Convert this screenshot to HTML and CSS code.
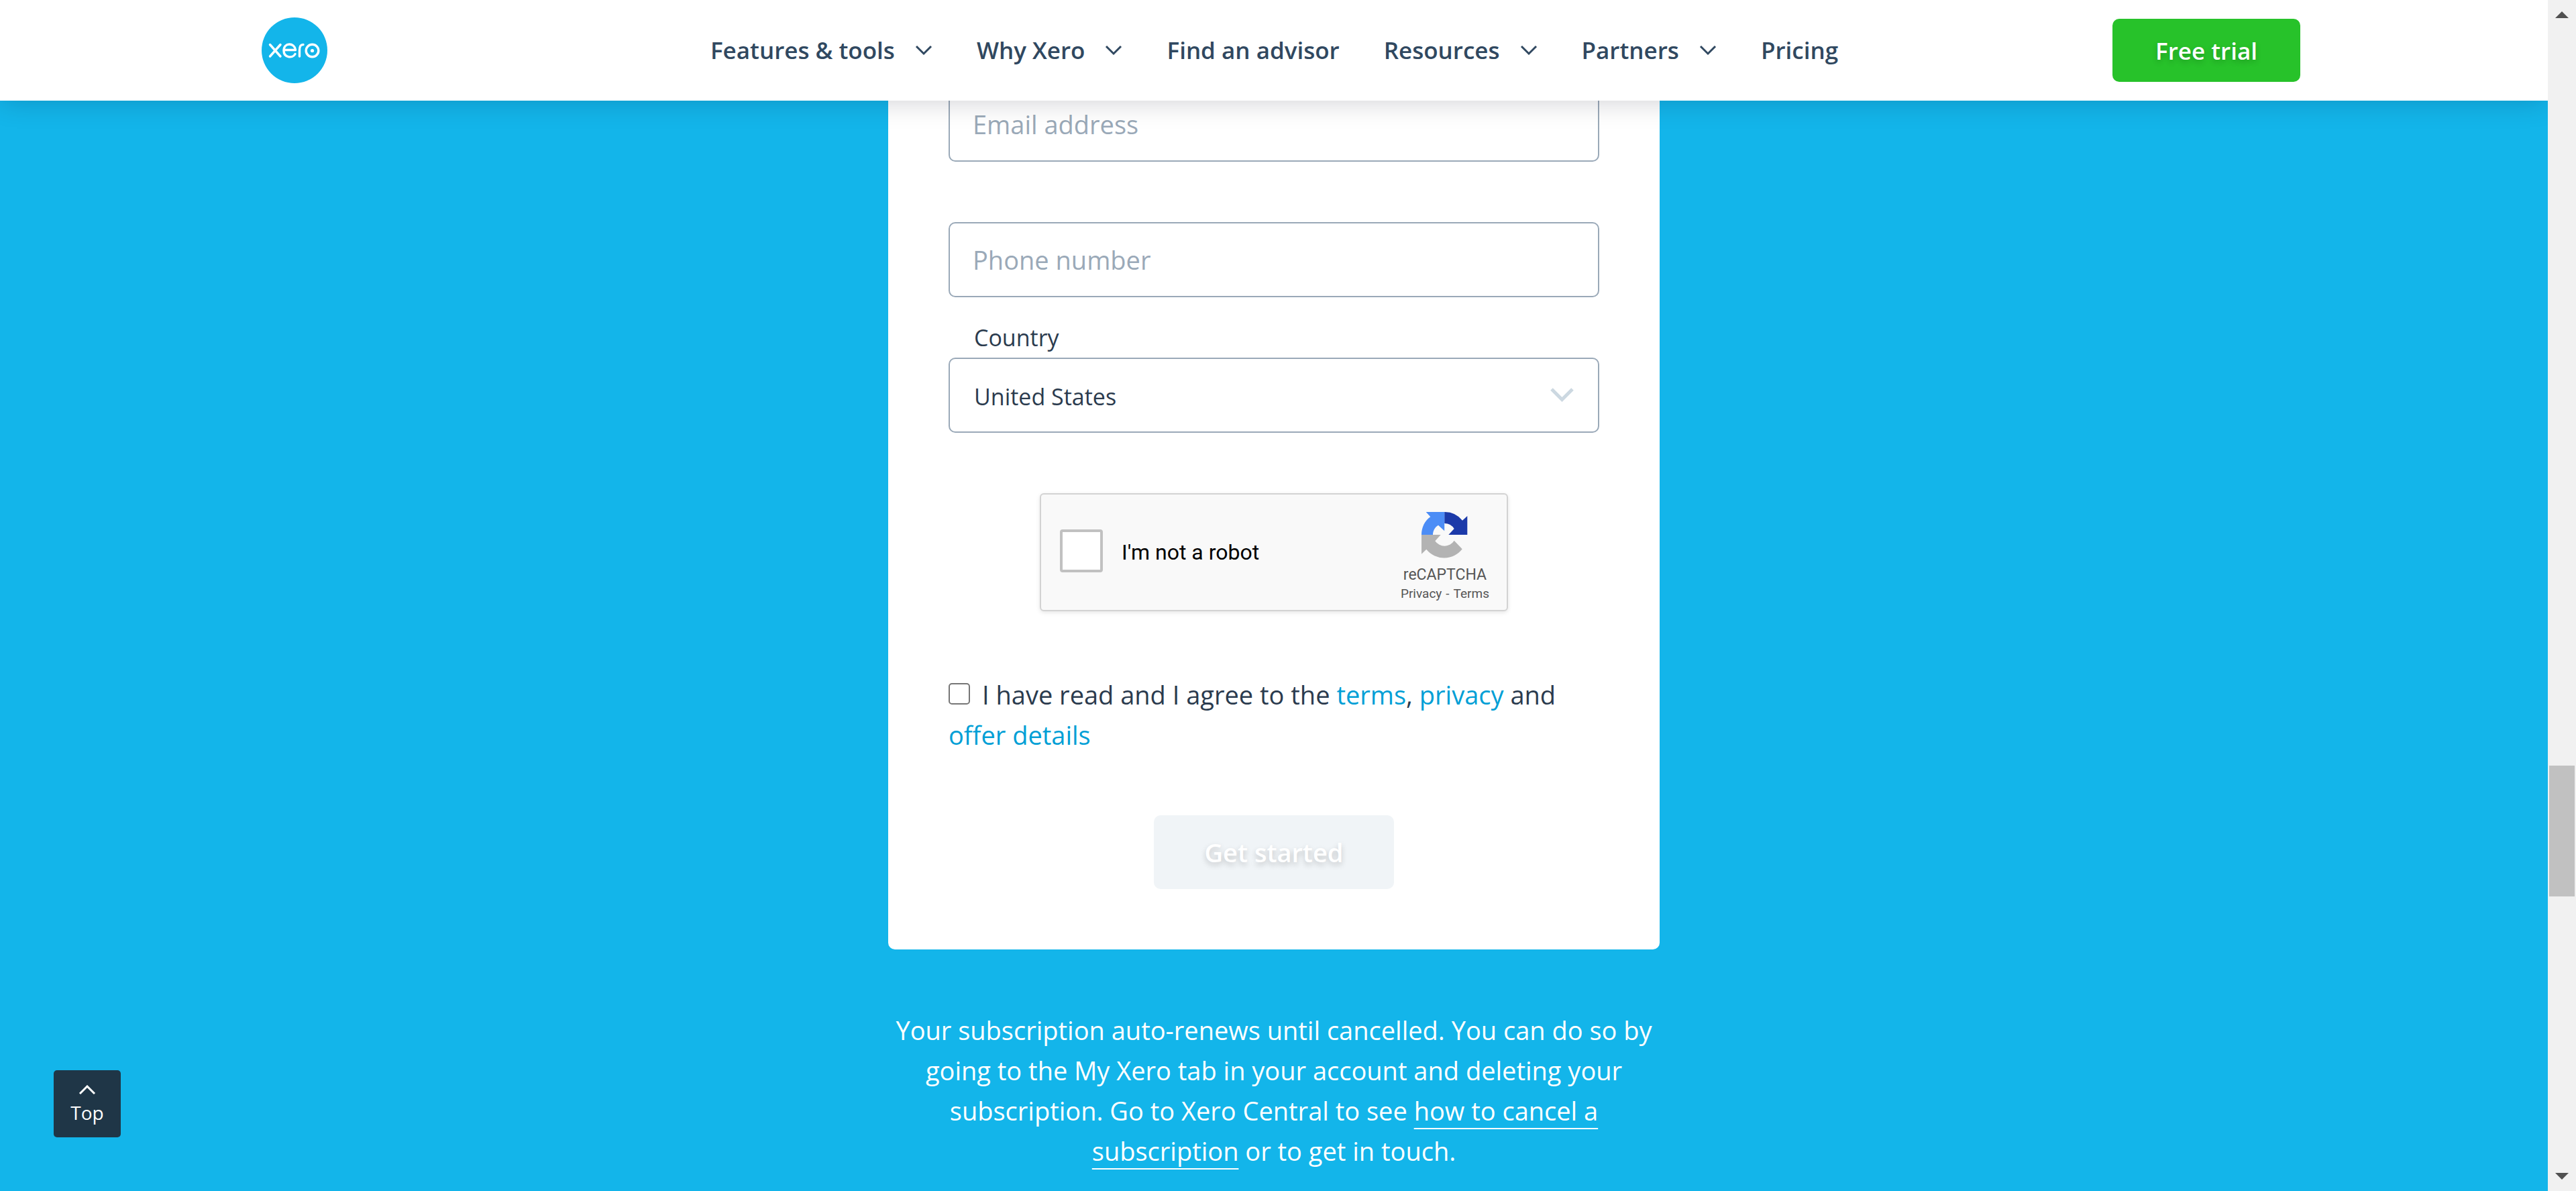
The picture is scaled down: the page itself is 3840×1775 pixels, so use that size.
FILE: index.html
```html
<!DOCTYPE html>
<html lang="en">
<head>
<meta charset="utf-8">
<title>Xero free trial</title>
<link rel="stylesheet" href="styles.css">
</head>
<body>
<div class="viewport">
  <div class="page">
    <header class="header">
      <a class="logo" href="#" aria-label="Xero">
        <svg viewBox="0 0 98 98" width="98" height="98">
          <circle cx="49" cy="49" r="49" fill="#13b5ea"/>
          <g fill="none" stroke="#fff" stroke-width="3.400" stroke-linecap="round" stroke-linejoin="round">
            <path d="M12.500 40.500L28 58M28 40.500L12.500 58"/>
            <path d="M33 48.500H50.500C49 37 33 37 33 49.500C33 60 46 61.500 50 54.500"/>
            <path d="M56.500 58V49C56.500 43 58 40.500 62 40.500"/>
            <circle cx="75.500" cy="49.500" r="9.300"/>
          </g>
          <circle cx="75.500" cy="49.500" r="2.600" fill="#fff"/>
        </svg>
      </a>
      <nav class="nav">
        <a href="#">Features &amp; tools <svg class="chev" viewBox="0 0 26 16"><path d="M2 2L13 13L24 2"/></svg></a>
        <a href="#">Why Xero <svg class="chev" viewBox="0 0 26 16"><path d="M2 2L13 13L24 2"/></svg></a>
        <a href="#">Find an advisor</a>
        <a href="#">Resources <svg class="chev" viewBox="0 0 26 16"><path d="M2 2L13 13L24 2"/></svg></a>
        <a href="#">Partners <svg class="chev" viewBox="0 0 26 16"><path d="M2 2L13 13L24 2"/></svg></a>
        <a href="#">Pricing</a>
      </nav>
      <button class="trial" type="button">Free trial</button>
    </header>

    <main class="main">
      <form class="card">
        <input class="field" type="email" placeholder="Email address" aria-label="Email address">
        <input class="field" type="tel" placeholder="Phone number" aria-label="Phone number">
        <div class="country">
          <label for="country">Country</label>
          <div class="select-wrap">
            <select class="field select" id="country"><option>United States</option></select>
            <svg class="select-chev" viewBox="0 0 35 21"><path d="M2 2L17.500 17.500L33 2"/></svg>
          </div>
        </div>
        <div class="captcha">
          <input class="captcha-box" type="checkbox" id="robot">
          <label for="robot">I'm not a robot</label>
          <div class="captcha-brand">
            <svg viewBox="0 0 69 70" width="69" height="70">
              <path fill="#1c3aa9" d="M34.200 0A34 34 0 0 1 61 12.700L68.300 6V34H40.300L48.700 25A17 17 0 0 0 34.200 17Z"/>
              <path fill="#4c8df6" d="M34.200 0H6.700L13.300 7.300C5 13 0 23 0 34H17C17 28 20 22.500 25 19.700L34.200 28.300Z"/>
              <path fill="#b3b3b3" d="M0 34H28.700L20.300 43.300A17 17 0 0 0 48.700 42.700L60.700 55.300A34 34 0 0 1 7.300 55.700L0 62.700Z"/>
            </svg>
            <span class="captcha-name">reCAPTCHA</span>
            <span class="captcha-links"><a href="#">Privacy</a><span>-</span><a href="#">Terms</a></span>
          </div>
        </div>
        <div class="agree">
          <input type="checkbox" id="agree"><label for="agree">I have read and I agree to the</label> <a href="#">terms</a>, <a href="#">privacy</a> and <a href="#">offer details</a>
        </div>
        <button class="submit" type="submit" disabled>Get started</button>
      </form>
      <p class="note">Your subscription auto-renews until cancelled. You can do so by going to the My Xero tab in your account and deleting your subscription. Go to Xero Central to see <a href="#">how to cancel a subscription</a> or to get in touch.</p>
    </main>

    <a class="top" href="#">
      <svg viewBox="0 0 26 15" width="26" height="15"><path d="M2 13L13 2L24 13"/></svg>
      Top
    </a>
  </div>
  <div class="scrollbar" aria-hidden="true">
    <svg viewBox="0 0 20 10" width="20" height="10"><path d="M10 0L20 10H0Z"/></svg>
    <div class="track"><div class="thumb"></div></div>
    <svg viewBox="0 0 20 10" width="20" height="10"><path d="M0 0H20L10 10Z"/></svg>
  </div>
</div>
</body>
</html>
```
FILE: styles.css
```css
* { box-sizing: border-box; }

body {
  margin: 0;
  font-family: "Open Sans", "Noto Sans", sans-serif;
  font-size: 38px;
  line-height: 60px;
  color: #2b3b4e;
  background: #13b5ea;
}

a { color: inherit; text-decoration: none; }

.viewport {
  display: flex;
  height: 100vh;
  overflow: hidden;
}

.page {
  position: relative;
  flex: 1;
  min-width: 0;
  overflow: hidden;
}

.header {
  position: relative;
  z-index: 1;
  display: grid;
  grid-template-columns: 1fr auto 1fr;
  align-items: center;
  height: 150px;
  padding: 0 369px 0 390px;
  background: #fff;
  box-shadow: 0 0 40px rgba(0, 10, 30, 0.2);
}

.logo { display: flex; }

.nav {
  display: flex;
  gap: 66px;
  margin-right: 20px;
  font-size: 35px;
  font-weight: 600;
  color: #304860;
}

.nav a {
  display: flex;
  align-items: center;
  gap: 30px;
  white-space: nowrap;
}

.chev {
  width: 26px;
  height: 16px;
  fill: none;
  stroke: #304860;
  stroke-width: 3;
}

button {
  border: 0;
  border-radius: 10px;
  font-family: inherit;
  font-size: 38px;
  font-weight: 600;
  color: #fff;
  text-shadow: 0 4px 8px rgba(0, 0, 0, 0.2);
}

.trial {
  justify-self: end;
  width: 280px;
  height: 94px;
  font-size: 35px;
  background: #27c22a;
}

.main {
  display: flex;
  flex-direction: column;
  align-items: center;
}

.card {
  display: flex;
  flex-direction: column;
  align-items: center;
  width: 1150px;
  margin-top: -21px;
  padding: 0 90px 90px;
  border-radius: 0 0 10px 10px;
  background: #fff;
}

.field {
  width: 100%;
  height: 112px;
  margin-bottom: 90px;
  padding: 0 34px;
  border: 2px solid #9aa9b8;
  border-radius: 10px;
  background: #fff;
  font-family: inherit;
  font-size: 38px;
  color: #304860;
}

.field::placeholder { color: #9aa9b8; opacity: 1; }

.country { width: 100%; margin-top: -60px; }

.country label {
  display: block;
  padding-left: 38px;
  font-size: 34px;
}

.select-wrap { position: relative; display: flex; }

.select {
  appearance: none;
  padding: 4px 36px 0;
  font-size: 34px;
  color: #2b3b4e;
}

.select-chev {
  position: absolute;
  top: 45px;
  right: 38px;
  width: 35px;
  height: 21px;
  fill: none;
  stroke: #ccd8e1;
  stroke-width: 5;
}

.captcha {
  display: flex;
  align-items: center;
  width: 698px;
  height: 176px;
  padding: 0 26px 4px 28px;
  border: 2px solid #d3d3d3;
  border-radius: 6px;
  background: #f9f9f9;
  box-shadow: 0 2px 6px rgba(0, 0, 0, 0.1);
  font-family: Roboto, sans-serif;
  font-size: 32px;
  color: #000;
}

.captcha label { padding-top: 4px; }

.captcha-box {
  appearance: none;
  width: 64px;
  height: 64px;
  margin: 0 28px 0 0;
  border: 4px solid #c1c1c1;
  border-radius: 4px;
  background: #fff;
}

.captcha-brand {
  display: flex;
  flex-direction: column;
  align-self: flex-start;
  align-items: center;
  margin: 26px 0 0 auto;
  color: #555;
}

.captcha-name { margin-top: 8px; font-size: 23px; line-height: 32px; }

.captcha-links {
  display: flex;
  gap: 6px;
  font-size: 19px;
  line-height: 24px;
}

.agree {
  width: 100%;
  margin: 94px 0 90px;
}

.agree input {
  appearance: none;
  width: 32px;
  height: 32px;
  margin: 0 18px 0 0;
  border: 2px solid #767676;
  border-radius: 5px;
  background: #fff;
}

.agree a { color: #009fd6; }

.submit {
  width: 358px;
  height: 110px;
  background: #f0f4f7;
}

.note {
  width: 1150px;
  margin: 90px 0 0;
  text-align: center;
  color: #fff;
}

.note a {
  text-decoration: underline;
  text-decoration-thickness: 2px;
  text-underline-offset: 11px;
  text-decoration-skip-ink: none;
}

.top {
  position: absolute;
  left: 80px;
  bottom: 80px;
  display: flex;
  flex-direction: column;
  align-items: center;
  justify-content: center;
  gap: 10px;
  width: 100px;
  height: 100px;
  border-radius: 5px;
  background: #1f3647;
  font-size: 28px;
  line-height: 32px;
  color: #fff;
}

.top svg { fill: none; stroke: #fff; stroke-width: 3; }

.scrollbar {
  display: flex;
  flex-direction: column;
  align-items: center;
  width: 42px;
  padding: 17px 0;
  background: #f1f1f1;
  fill: #505050;
}

.track {
  flex: 1;
  align-self: stretch;
  padding: 0 2px;
}

.thumb {
  height: 195px;
  margin-top: 1114px;
  background: #c1c1c1;
}
```
